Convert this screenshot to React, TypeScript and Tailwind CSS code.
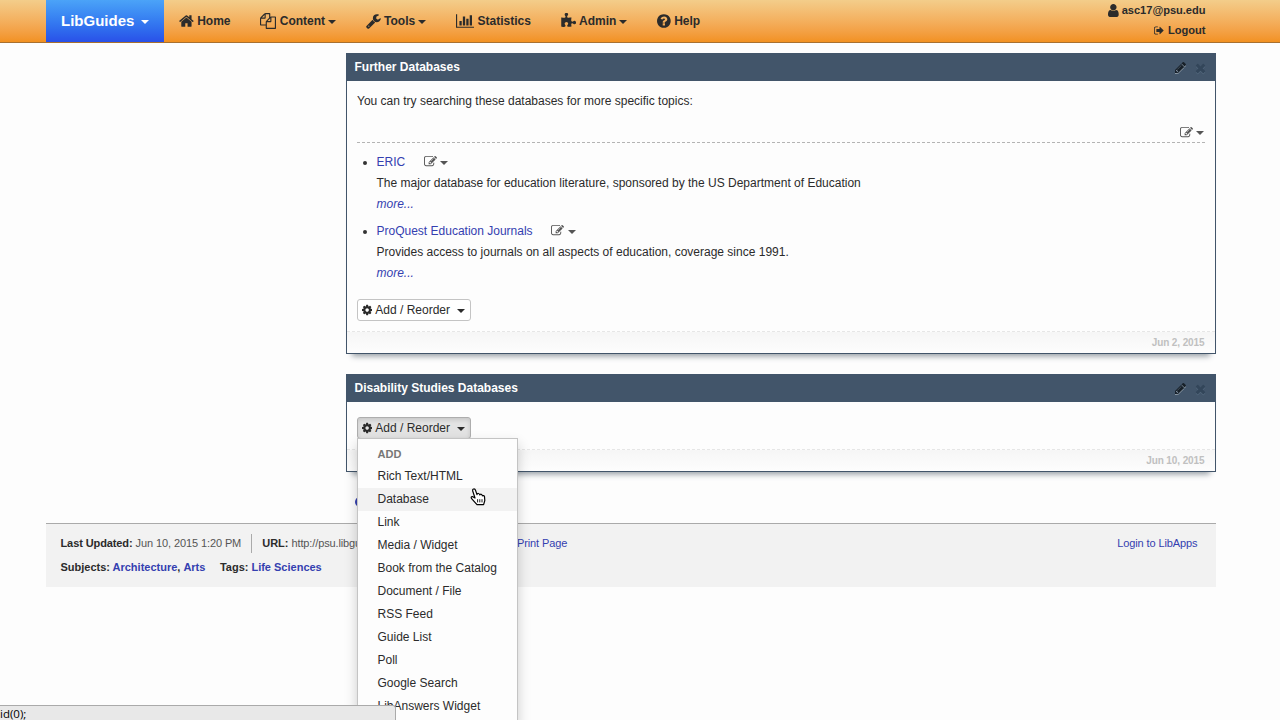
import React from 'react';

// [viewBox, path]
const ICONS = {
  home: ['64 0 1664 1792', 'M1472 992v480q0 26-19 45t-45 19h-384v-384h-256v384h-384q-26 0-45-19t-19-45v-480q0-1 .5-3t.5-3l575-474 575 474q1 2 1 6zm223-69l-62 74q-8 9-21 11h-3q-13 0-21-7l-692-577-692 577q-12 8-24 7-13-2-21-11l-62-74q-8-10-7-23.5t11-21.5l719-599q32-26 76-26t76 26l244 204v-195q0-14 9-23t23-9h192q14 0 23 9t9 23v408l219 182q10 8 11 21.5t-7 23.5z'],
  files: ['0 0 1792 1792', 'M1696 384q40 0 68 28t28 68v1216q0 40-28 68t-68 28h-960q-40 0-68-28t-28-68v-288h-544q-40 0-68-28t-28-68v-672q0-40 20-88t48-76l408-408q28-28 76-48t88-20h416q40 0 68 28t28 68v328q68-40 128-40h416zm-544 213l-299 299h299v-299zm-640-384l-299 299h299v-299zm196 647l316-316v-416h-384v416q0 40-28 68t-68 28h-416v640h512v-256q0-40 20-88t48-76zm956 804v-1152h-384v416q0 40-28 68t-68 28h-416v640h896z'],
  wrench: ['64 0 1664 1792', 'M448 1472q0-26-19-45t-45-19-45 19-19 45 19 45 45 19 45-19 19-45zm644-420l-682 682q-37 37-90 37-52 0-91-37l-106-108q-38-36-38-90 0-53 38-91l681-681q39 98 114.5 173.5t173.5 114.5zm634-435q0 39-23 106-47 134-164.5 217.5t-258.5 83.5q-185 0-316.5-131.5t-131.5-316.5 131.5-316.5 316.5-131.5q58 0 121.5 16.5t107.5 46.5q16 11 16 28t-16 28l-293 169v224l193 107q5-3 79-48.5t135.5-81 70.5-35.5q15 0 23.5 10t8.5 25z'],
  chart: ['0 0 2048 1792', 'M640 896v512h-256v-512h256zm384-512v1024h-256v-1024h256zm1024 1152v128h-2048v-1536h128v1408h1920zm-640-896v768h-256v-768h256zm384-384v1152h-256v-1152h256z'],
  puzzle: ['64 0 1664 1792', 'M1755 1083q0 81-44.5 135t-123.5 54q-41 0-77.5-17.5t-59-38-56.5-38-71-17.5q-110 0-110 124 0 39 16 115t15 115v5q-22 0-33 1-34 3-97.5 11.5t-115.5 13.5-98 5q-61 0-103-26.5t-42-83.5q0-37 17.5-71t38-56.5 38-59 17.5-77.5q0-79-54-123.5t-135-44.5q-84 0-143 45.5t-59 127.5q0 43 15 83t33.5 64.5 33.5 53 15 50.5q0 45-46 89-37 35-117 35-95 0-245-24-9-2-27.5-4t-27.5-4l-13-2q-1 0-3-1-2 0-2-1v-1024q2 1 17.5 3.5t34 5 21.5 3.5q150 24 245 24 80 0 117-35 46-44 46-89 0-22-15-50.5t-33.5-53-33.5-64.5-15-83q0-82 59-127.5t144-45.5q80 0 134 44.5t54 123.5q0 41-17.5 77.5t-38 59-38 56.5-17.5 71q0 57 42 83.5t103 26.5q64 0 180-15t163-17v2q-1 2-3.5 17.5t-5 34-3.5 21.5q-24 150-24 245 0 80 35 117 44 46 89 46 22 0 50.5-15t53-33.5 64.5-33.5 83-15q82 0 127.5 59t45.5 143z'],
  help: ['128 0 1536 1792', 'M1024 1376v-192q0-14-9-23t-23-9h-192q-14 0-23 9t-9 23v192q0 14 9 23t23 9h192q14 0 23-9t9-23zm256-672q0-88-55.5-163t-138.5-116-170-41q-243 0-371 213-15 24 8 42l132 100q7 6 19 6 16 0 25-12 53-68 86-92 34-24 86-24 48 0 85.5 26t37.5 59q0 38-20 61t-68 45q-63 28-115.5 86.5t-52.5 125.5v36q0 14 9 23t23 9h192q14 0 23-9t9-23q0-19 21.5-49.5t54.5-49.5q32-18 49-28.5t46-35 44.5-48 28-60.5 12.5-81zm384 192q0 209-103 385.5t-279.5 279.5-385.5 103-385.5-103-279.5-279.5-103-385.5 103-385.5 279.5-279.5 385.5-103 385.5 103 279.5 279.5 103 385.5z'],
  user: ['256 0 1280 1792', 'M1536 1399q0 109-62.5 187t-150.5 78h-854q-88 0-150.5-78t-62.5-187q0-85 8.5-160.5t31.5-152 58.5-131 94-89 134.5-34.5q131 128 313 128t313-128q76 0 134.5 34.5t94 89 58.5 131 31.5 152 8.5 160.5zm-256-887q0 159-112.5 271.5t-271.5 112.5-271.5-112.5-112.5-271.5 112.5-271.5 271.5-112.5 271.5 112.5 112.5 271.5z'],
  logout: ['64 0 1568 1792', 'M704 1440q0 4 1 20t.5 26.5-3 23.5-10 19.5-20.5 6.5h-320q-119 0-203.5-84.5t-84.5-203.5v-704q0-119 84.5-203.5t203.5-84.5h320q13 0 22.5 9.5t9.5 22.5q0 4 1 20t.5 26.5-3 23.5-10 19.5-20.5 6.5h-320q-66 0-113 47t-47 113v704q0 66 47 113t113 47h312l11.5 1 11.5 3 8 5.5 7 9 2 13.5zm928-544q0 26-19 45l-544 544q-19 19-45 19t-45-19-19-45v-288h-448q-26 0-45-19t-19-45v-384q0-26 19-45t45-19h448v-288q0-26 19-45t45-19 45 19l544 544q19 19 19 45z'],
  edit: ['0 0 1792 1792', 'M888 1184l116-116-152-152-116 116v56h96v96h56zm440-720q-16-16-33 1l-350 350q-17 17-1 33t33-1l350-350q17-17 1-33zm80 594v190q0 119-84.5 203.5t-203.5 84.5h-832q-119 0-203.5-84.5t-84.5-203.5v-832q0-119 84.5-203.5t203.5-84.5h832q63 0 117 25 15 7 18 23 3 17-9 29l-49 49q-14 14-32 8-23-6-45-6h-832q-66 0-113 47t-47 113v832q0 66 47 113t113 47h832q66 0 113-47t47-113v-126q0-13 9-22l64-64q15-15 35-7t20 29zm-96-738l288 288-672 672h-288v-288zm444 132l-92 92-288-288 92-92q28-28 68-28t68 28l152 152q28 28 28 68t-28 68z'],
  cog: ['128 0 1536 1792', 'M1152 896q0-106-75-181t-181-75-181 75-75 181 75 181 181 75 181-75 75-181zm512-109v222q0 12-8 23t-20 13l-185 28q-19 54-39 91 35 50 107 138 10 12 10 25t-9 23q-27 37-99 108t-94 71q-12 0-26-9l-138-108q-44 23-91 38-16 136-29 186-7 28-36 28h-222q-14 0-24.5-8.5t-11.5-21.5l-28-184q-49-16-90-37l-141 107q-10 9-25 9-14 0-25-11-126-114-165-168-7-10-7-23 0-12 8-23 15-21 51-66.5t54-70.5q-27-50-41-99l-183-27q-13-2-21-12.5t-8-23.5v-222q0-12 8-23t19-13l186-28q14-46 39-92-40-57-107-138-10-12-10-24 0-10 9-23 26-36 98.5-107.5t94.5-71.5q13 0 26 10l138 107q44-23 91-38 16-136 29-186 7-28 36-28h222q14 0 24.5 8.5t11.5 21.5l28 184q49 16 90 37l142-107q9-9 24-9 13 0 25 10 129 119 165 170 7 8 7 22 0 12-8 23-15 21-51 66.5t-54 70.5q26 50 41 98l183 28q13 2 21 12.5t8 23.5z'],
  pencil: ['128 0 1536 1792', 'M491 1536l91-91-235-235-91 91v107h128v128h107zm523-928q0-22-22-22-10 0-17 7l-542 542q-7 7-7 17 0 22 22 22 10 0 17-7l542-542q7-7 7-17zm-54-192l416 416-832 832h-416v-416zm683 96q0 53-37 90l-166 166-416-416 166-165q36-38 90-38 53 0 91 38l235 234q37 39 37 91z'],
  times: ['192 0 1408 1792', 'M1490 1322q0 40-28 68l-136 136q-28 28-68 28t-68-28l-294-294-294 294q-28 28-68 28t-68-28l-136-136q-28-28-28-68t28-68l294-294-294-294q-28-28-28-68t28-68l136-136q28-28 68-28t68 28l294 294 294-294q28-28 68-28t68 28l136 136q28 28 28 68t-28 68l-294 294 294 294q28 28 28 68z'],
};

type IconName = keyof typeof ICONS;

const Icon = ({ name, className }: { name: IconName; className: string }) => (
  <svg viewBox={ICONS[name][0]} fill="currentColor" className={`shrink-0 w-auto ${className}`}>
    <path d={ICONS[name][1]} />
  </svg>
);

const Caret = ({ className = '' }: { className?: string }) => (
  <span className={`border-x-4 border-t-4 border-x-transparent border-t-current ${className}`} />
);

const NAV: { icon: IconName; label: string; menu?: boolean }[] = [
  { icon: 'home', label: 'Home' },
  { icon: 'files', label: 'Content', menu: true },
  { icon: 'wrench', label: 'Tools', menu: true },
  { icon: 'chart', label: 'Statistics' },
  { icon: 'puzzle', label: 'Admin', menu: true },
  { icon: 'help', label: 'Help' },
];

const DATABASES = [
  { name: 'ERIC', desc: 'The major database for education literature, sponsored by the US Department of Education' },
  { name: 'ProQuest Education Journals', desc: 'Provides access to journals on all aspects of education, coverage since 1991.' },
];

const MENU = [
  'Rich Text/HTML', 'Database', 'Link', 'Media / Widget', 'Book from the Catalog', 'Document / File',
  'RSS Feed', 'Guide List', 'Poll', 'Google Search', 'LibAnswers Widget',
];

const EditMenu = () => (
  <button className="flex items-center text-[#555]">
    <Icon name="edit" className="h-[13px]" />
    <Caret className="ml-[3.5px] mt-0.5" />
  </button>
);

const AddReorder = ({ active = false }: { active?: boolean }) => (
  <button
    className={`flex h-[22px] w-[114px] items-center rounded-[3px] border pl-1 text-[#2b2b2b] ${
      active ? 'border-[#adadad] bg-[#e3e3e3] shadow-[inset_0_2px_4px_rgba(0,0,0,0.13)]' : 'border-[#c4c4c4] bg-white'
    }`}
  >
    <Icon name="cog" className="h-[12px]" />
    <span className="ml-[3px]">Add / Reorder</span>
    <Caret className="ml-[7px] mt-0.5" />
  </button>
);

interface BoxProps {
  title: string;
  date: string;
  children: React.ReactNode;
}

const Box = ({ title, date, children }: BoxProps) => (
  <section className="border border-[#42556a] bg-[#fdfdfd] shadow-[0_8px_6px_-6px_#8f979e]">
    <header className="flex h-[27px] items-center justify-between bg-[#42556a] pb-0.5 pl-[7.5px] pr-[9px] font-bold text-white">
      <h2>{title}</h2>
      <div className="flex items-center gap-[9px] pt-0.5">
        <Icon name="pencil" className="h-[13px] text-[#172029] drop-shadow-[0_1px_0_#8b98a4]" />
        <Icon name="times" className="h-[14px] text-[#33465a] drop-shadow-[0_1px_0_#52667b]" />
      </div>
    </header>
    <div className="px-[10px] pb-[10px]">{children}</div>
    <footer className="flex h-[22px] items-center justify-end border-t border-dashed border-[#e6e6e6] bg-linear-to-b from-[#f6f6f6] to-[#fdfdfd] pr-[10.5px] text-[10px] font-bold tracking-[-0.1px] text-[#c0c0c0]">
      {date}
    </footer>
  </section>
);

const AddMenu = () => (
  <div className="absolute left-0 top-[21px] z-10 w-[161px] border border-[#c4c4c4] bg-[#fdfdfd] py-1 shadow-[0_6px_12px_rgba(0,0,0,0.2)]">
    <div className="flex h-[22px] items-center pl-[19.5px] pt-px text-[11px] font-bold text-[#777]">ADD</div>
    {MENU.map((item) => (
      <div key={item} className={`flex h-[23px] items-center pb-0.5 pl-[19.5px] text-[#2b2b2b] ${item === 'Database' ? 'bg-[#f2f2f2]' : ''}`}>
        {item}
      </div>
    ))}
  </div>
);

export default function App() {
  return (
    <div className="relative flex h-screen flex-col overflow-hidden bg-[#fdfdfd] font-['Liberation_Sans',Arial,sans-serif] text-xs text-[#2b2b2b]">
      <nav className="flex h-[43px] shrink-0 border-b border-[#a8702f] bg-linear-to-b from-[#f3cd8a] to-[#f29120] pl-[46px] pr-[74.5px] font-bold">
        <a className="flex w-[118px] items-center bg-linear-to-b from-[#4ba3f8] to-[#2a50e8] pl-[15px] text-[15px] text-white">
          LibGuides
          <Caret className="ml-[7px] mt-0.5" />
        </a>
        {NAV.map((item) => (
          <a key={item.label} className="flex items-center px-[15px]">
            <Icon name={item.icon} className="h-[16px]" />
            <span className="ml-[3.3px]">{item.label}</span>
            {item.menu && <Caret className="ml-[2.8px] mt-0.5" />}
          </a>
        ))}
        <div className="ml-auto flex flex-col items-end text-[11.1px] tracking-[-0.03px]">
          <div className="flex h-[21px] items-center gap-[3px]">
            <Icon name="user" className="h-[15px]" />
            asc17@psu.edu
          </div>
          <div className="flex h-[19px] items-center gap-1">
            <Icon name="logout" className="h-[11px]" />
            Logout
          </div>
        </div>
      </nav>

      <main className="ml-[346px] mt-[10px] flex w-[870px] flex-col gap-5">
        <Box title="Further Databases" date="Jun 2, 2015">
          <p className="flex h-10 items-center">You can try searching these databases for more specific topics:</p>
          <div className="flex h-[22px] items-center justify-end border-b border-dashed border-[#b4b4b4] pr-px pt-px">
            <EditMenu />
          </div>
          <ul className="flex flex-col gap-1.5 pt-[9px] leading-[21px]">
            {DATABASES.map((db) => (
              <li key={db.name} className="pl-[19.5px]">
                <div className="flex items-center">
                  <span className="-ml-[14px] mr-[10px] mt-px size-1 rounded-full bg-[#333]" />
                  <a className="mr-[18.5px] text-[#3440b0]">{db.name}</a>
                  <div className="-mt-0.5"><EditMenu /></div>
                </div>
                <p>{db.desc}</p>
                <a className="block italic text-[#3440b0]">more...</a>
              </li>
            ))}
          </ul>
          <div className="mt-[15px]">
            <AddReorder />
          </div>
        </Box>
        <Box title="Disability Studies Databases" date="Jun 10, 2015">
          <div className="relative mt-[15px]">
            <AddReorder active />
            <AddMenu />
          </div>
        </Box>
      </main>

      <div className="ml-[355px] flex h-[51px] items-center pt-[9px]">
        <Icon name="help" className="h-[12px] text-[#3440b0]" />
      </div>

      <footer className="ml-[46px] h-16 w-[1170px] shrink-0 border-t border-[#aaa] bg-[#f2f2f2] px-[14.5px] pt-[7px] text-[11px]">
        <div className="flex h-6 items-center">
          <b className="mr-[3px] tracking-[-0.1px]">Last Updated:</b>
          <span className="tracking-[-0.1px] text-[#555]">Jun 10, 2015 1:20 PM</span>
          <span className="mx-[10px] h-[19px] w-px bg-[#aaa]" />
          <b className="mr-[3px]">URL:</b>
          <span className="whitespace-nowrap tracking-[-0.12px] text-[#555]">http://psu.libgui</span>
          <a className="ml-[153.5px] tracking-[-0.1px] text-[#3440b0]">Print Page</a>
          <a className="ml-auto mr-1 tracking-[-0.1px] text-[#3440b0]">Login to LibApps</a>
        </div>
        <div className="flex h-6 items-center font-bold">
          <span className="mr-[2.5px]">Subjects:</span>
          <a className="text-[#3440b0]">Architecture</a>
          <span className="mr-[3px]">,</span>
          <a className="text-[#3440b0]">Arts</a>
          <span className="ml-[14.5px] mr-[3px]">Tags:</span>
          <a className="text-[#3440b0]">Life Sciences</a>
        </div>
      </footer>

      {/* browser status bubble */}
      <div className="absolute bottom-0 left-0 z-20 flex h-[15px] w-[396px] items-center rounded-tr-[3px] border-r border-t border-[#aaa] bg-[#e8e8e8] pt-0.5 font-['Open_Sans',sans-serif] text-[11.5px] text-black">
        id(0);
      </div>

      {/* hand cursor */}
      <svg viewBox="0 0 16 18" className="absolute left-[470px] top-[488px] z-30 h-[18px] w-4" fill="#fff" stroke="#000" strokeWidth="1.2" strokeLinejoin="round">
        <path d="M5 10 2.7 3Q2.4 1.2 3.7 1T5.5 2.2L7 6.6Q7.2 5.2 8.4 5.5T9.8 7Q10.5 5.8 11.5 6.4T12.4 7.8Q14 7 14.5 8.6L14.8 12.5 13.6 16.6H7L1.4 10.4Q.7 8.6 2.3 8.5Z" />
        <path d="M7.6 11.2v3.2M9.8 11.2v3.2M12 11.2v3.2" strokeWidth="0.9" />
      </svg>
    </div>
  );
}
